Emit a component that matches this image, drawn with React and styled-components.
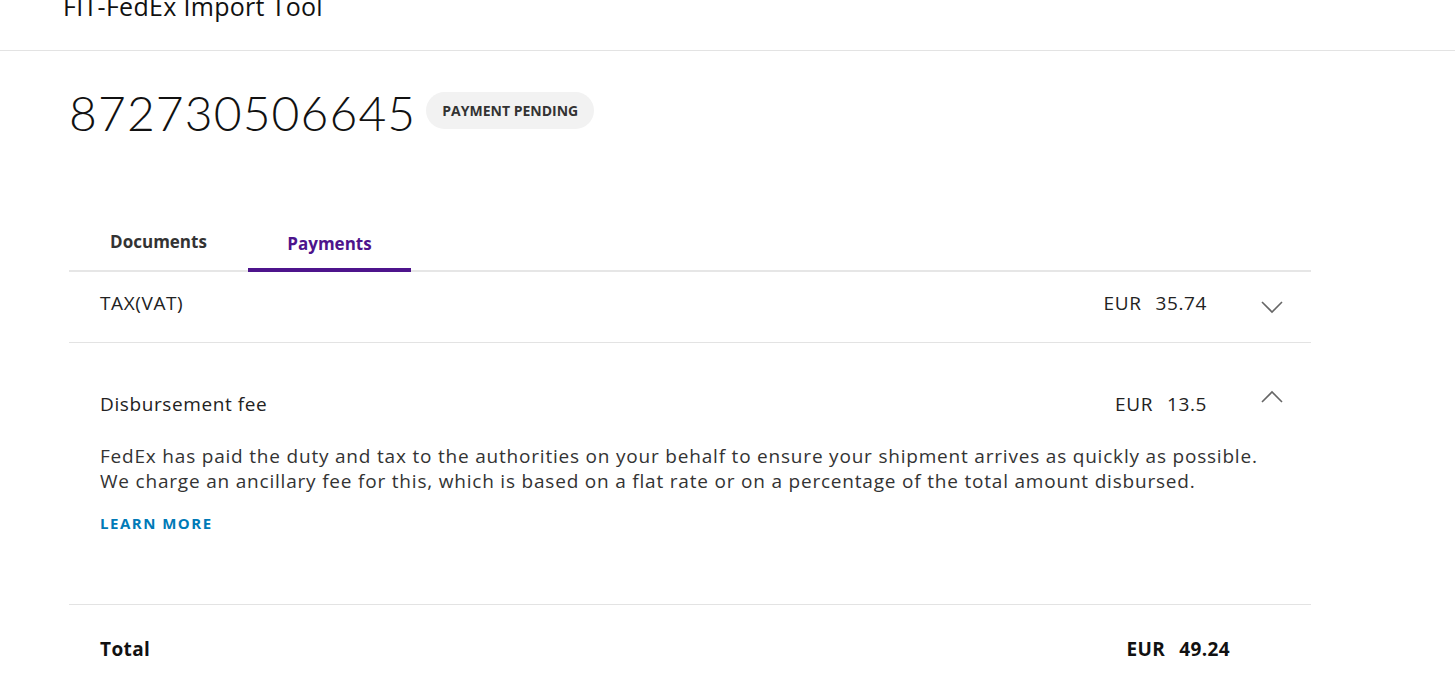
import React, { useState } from 'react';
import styled, { createGlobalStyle } from 'styled-components';

const Global = createGlobalStyle`
  html, body { margin: 0; padding: 0; background: #fff; }
  body { font-family: "Open Sans", Lato, sans-serif; color: #1a1a1a; }
`;

const Header = styled.header`
  height: 50px;
  border-bottom: 1px solid #e3e3e3;
  overflow: hidden;
`;

const Brand = styled.div`
  font-size: 25px;
  line-height: 25px;
  margin-top: -6px;
  padding-left: 63px;
  letter-spacing: 0.3px;
  color: #111;
`;

const Main = styled.main`
  padding: 0 144px 0 69px;
`;

const TitleRow = styled.div`
  display: flex;
  align-items: center;
  gap: 10px;
  margin-top: 37px;
  height: 48px;
`;

const Title = styled.h1`
  margin: 0;
  font-family: Lato, sans-serif;
  font-size: 48px;
  font-weight: 300;
  letter-spacing: 1.1px;
  color: #111;
`;

const Badge = styled.span`
  display: inline-flex;
  align-items: center;
  height: 37px;
  padding: 0 16px;
  border-radius: 19px;
  background: #f2f2f2;
  color: #333;
  font-size: 14px;
  font-weight: 700;
  margin-top: -4px;
`;

const Tabs = styled.div`
  display: flex;
  margin-top: 88px;
  border-bottom: 2px solid #e6e6e6;
`;

const Tab = styled.button`
  border: 0;
  background: none;
  font-family: inherit;
  font-size: 17px;
  font-weight: 700;
  cursor: pointer;
  width: ${p => p.$w}px;
  height: 48px;
  padding: ${p => (p.$active ? '0 0 6px' : '0 0 10px')};
  color: ${p => (p.$active ? '#4d148c' : '#333')};
  border-bottom: 4px solid ${p => (p.$active ? '#4d148c' : 'transparent')};
  margin-bottom: -2px;
`;

const Row = styled.div`
  display: flex;
  align-items: center;
  height: ${p => p.$h}px;
  padding-left: 31px;
  padding-top: ${p => p.$pt || 0}px;
  padding-bottom: ${p => p.$pb || 0}px;
  font-size: 19px;
  line-height: 24px;
  letter-spacing: 0.6px;
  color: #222;
`;

const Label = styled.span`
  flex: 1;
`;

const Amount = styled.span`
  display: flex;
  gap: 14px;
`;

const Chevron = styled.span`
  display: inline-flex;
  width: 24px;
  margin-left: 53px;
  margin-right: 27px;
  margin-top: ${p => p.$mt}px;
  color: #666;
`;

const Section = styled.section`
  border-bottom: 1px solid #e3e3e3;
`;

const Desc = styled.p`
  margin: 9px 0 0 31px;
  font-size: 19px;
  line-height: 25px;
  letter-spacing: 0.8px;
  color: #333;
`;

const More = styled.a`
  display: inline-block;
  margin: 19px 0 0 31px;
  padding-bottom: 71px;
  color: #007ab7;
  font-size: 15px;
  line-height: 20px;
  font-weight: 700;
  letter-spacing: 1.5px;
  text-decoration: none;
`;

const TotalRow = styled.div`
  display: flex;
  align-items: center;
  height: 88px;
  padding-left: 31px;
  padding-right: 81px;
  font-weight: 700;
  font-size: 19px;
  letter-spacing: 0.4px;
  color: #111;
`;

const Down = () => (
  <svg width="24" height="14" viewBox="0 0 24 14" fill="none" stroke="currentColor" strokeWidth="1.6">
    <path d="M2 2l10 10L22 2" />
  </svg>
);
const Up = () => (
  <svg width="24" height="14" viewBox="0 0 24 14" fill="none" stroke="currentColor" strokeWidth="1.6">
    <path d="M2 12L12 2l10 10" />
  </svg>
);

export default function App() {
  const [tab, setTab] = useState('payments');
  return (
    <>
      <Global />
      <Header>
        <Brand>FIT-FedEx Import Tool</Brand>
      </Header>
      <Main>
        <TitleRow>
          <Title>872730506645</Title>
          <Badge>PAYMENT PENDING</Badge>
        </TitleRow>
        <Tabs>
          <Tab $w={179} $active={tab === 'documents'} onClick={() => setTab('documents')}>Documents</Tab>
          <Tab $w={163} $active={tab === 'payments'} onClick={() => setTab('payments')}>Payments</Tab>
        </Tabs>
        <Section>
          <Row $h={62} $pb={8}>
            <Label>TAX(VAT)</Label>
            <Amount><span>EUR</span><span>35.74</span></Amount>
            <Chevron $mt={8}><Down /></Chevron>
          </Row>
        </Section>
        <Section>
          <Row $h={62} $pt={30}>
            <Label>Disbursement fee</Label>
            <Amount><span>EUR</span><span>13.5</span></Amount>
            <Chevron $mt={-14}><Up /></Chevron>
          </Row>
          <Desc>
            FedEx has paid the duty and tax to the authorities on your behalf to ensure your shipment arrives as quickly as possible.
            <br />
            We charge an ancillary fee for this, which is based on a flat rate or on a percentage of the total amount disbursed.
          </Desc>
          <More href="#">LEARN MORE</More>
        </Section>
        <TotalRow>
          <Label>Total</Label>
          <Amount><span>EUR</span><span>49.24</span></Amount>
        </TotalRow>
      </Main>
    </>
  );
}
